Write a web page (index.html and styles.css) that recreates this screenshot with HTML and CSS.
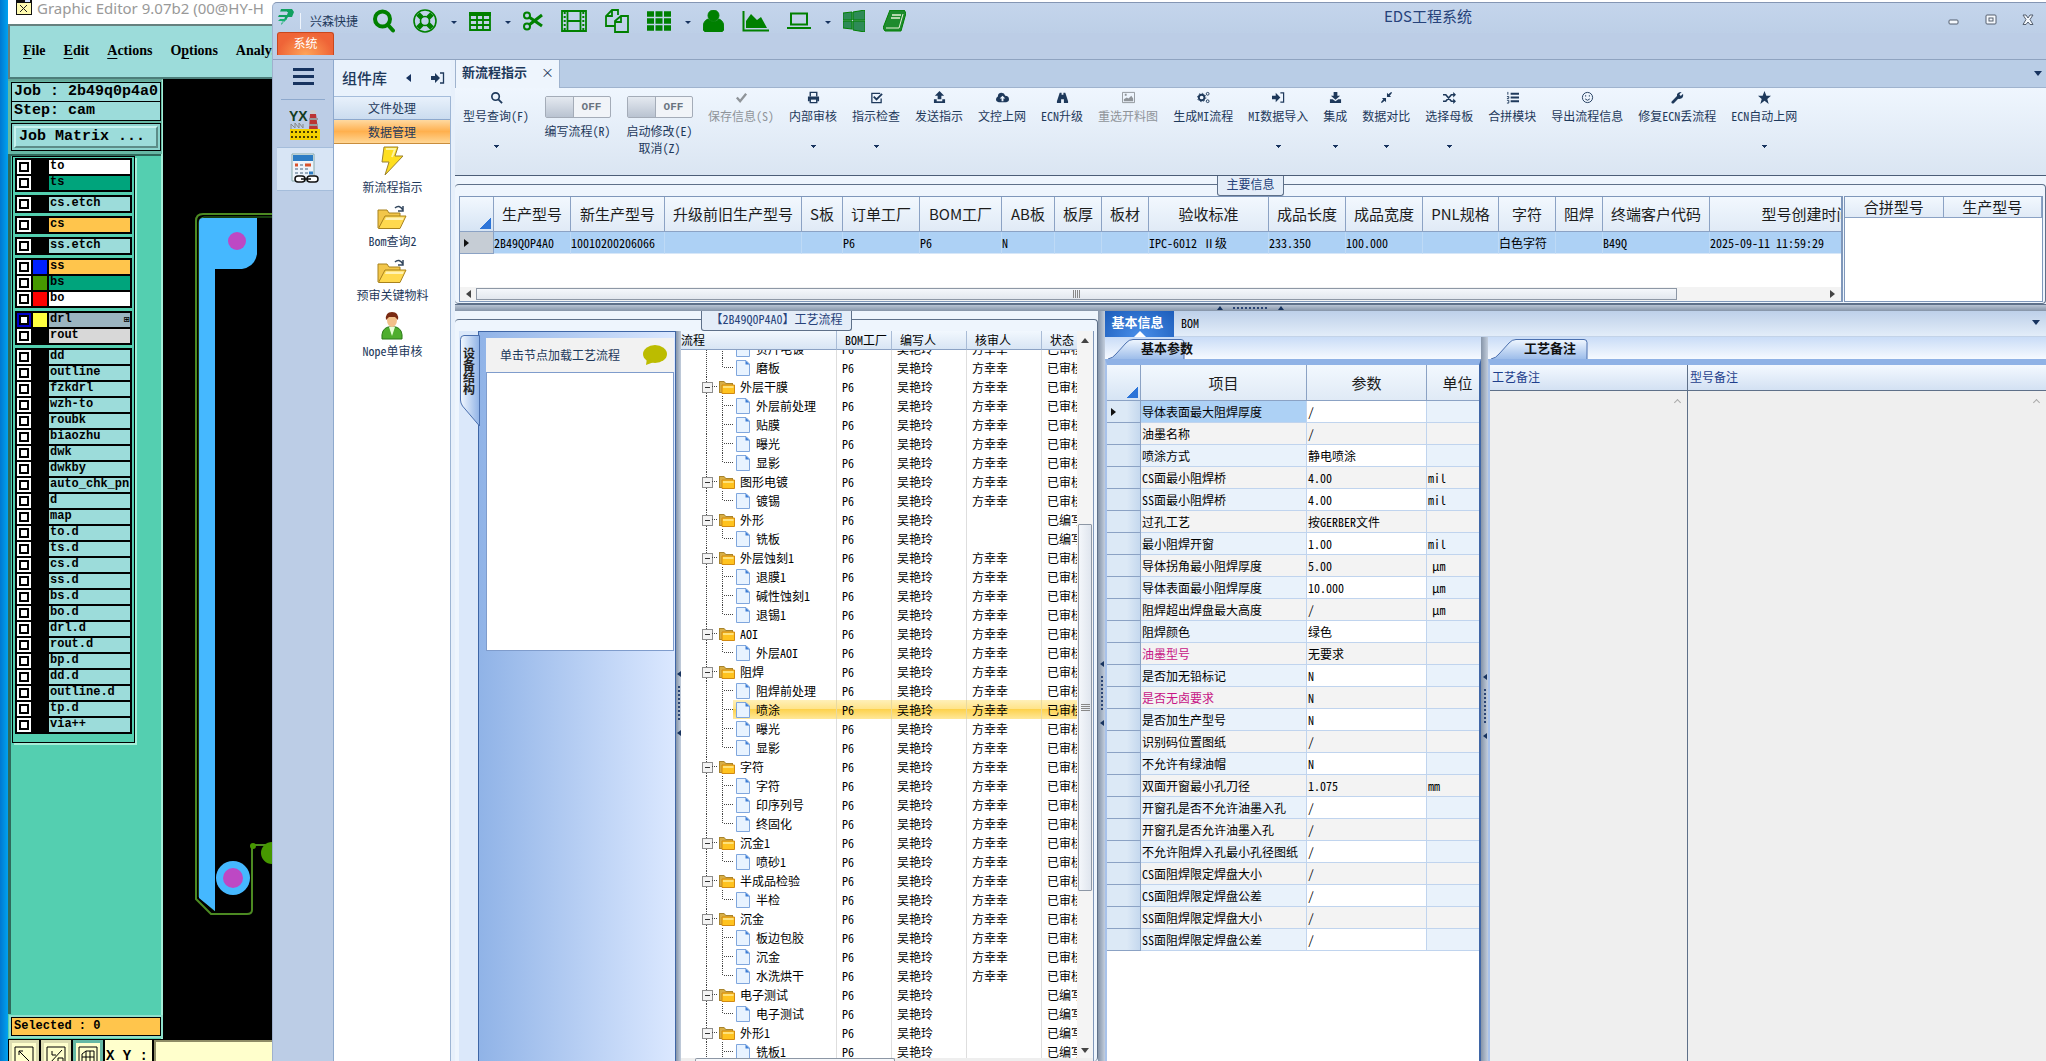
FILE: index.html
```html
<!DOCTYPE html>
<html lang="zh-CN">
<head>
<meta charset="utf-8">
<title>EDS工程系统</title>
<link rel="stylesheet" href="styles.css">
</head>
<body>
<svg class="defs" aria-hidden="true">
  <symbol id="folder" viewBox="0 0 16 15"><path d="M0 2h5l2 2h7v10H0z" fill="#a8842c"/><path d="M1 3h4l2 2h6v8H1z" fill="#d8ae45"/><path d="M3 6h12.500v8.500H3z" fill="#ffc31f" stroke="#d28a12"/><path d="M4 7h10.500v2H4z" fill="#ffe27a"/></symbol>
  <symbol id="doc" viewBox="0 0 14 16"><path d="M.5.5h9.500l3.500 3.500v11.500H.5z" fill="#e8f3ff" stroke="#7fa6dd"/><path d="M9.500.5v4h4z" fill="#3f7fd6"/></symbol>
  <symbol id="bigfolder" viewBox="0 0 30 26"><path d="M1 24V6h9l2 3h11v4" fill="#f2c64a" stroke="#a8821d"/><path d="M1.500 24.500L8 12h21l-6 12.500z" fill="#ffd94f" stroke="#a8821d"/><path d="M9 13.500h18l-1 2.500H8z" fill="#fff2b5"/><path d="M18 4q4-4 8 2M26 2v5h-5" fill="none" stroke="#33475f" stroke-width="1.500"/></symbol>
  <symbol id="pin" viewBox="0 0 14 12"><path d="M0 4h4V1l5 5-5 5V8H0z" fill="currentColor"/><path d="M9 1h3.500v10H9" fill="none" stroke="currentColor" stroke-width="1.300"/></symbol>
</svg>

<section class="editor">
  <header class="editor-title"><svg width="16" height="15" viewBox="0 0 16 15"><path d="M0 0h16v15H0z" fill="#111"/><path d="M1 3h14v11H1z" fill="#fffbb0"/><path d="M9 0h5v2H9z" fill="#cfe0ff"/><path d="M4 5l7 7M11 5l-7 7" stroke="#222"/></svg><span>Graphic Editor 9.07b2 (00@HY-H</span></header>
  <nav class="menubar"><button><u>F</u>ile</button><button><u>E</u>dit</button><button><u>A</u>ctions</button><button>O<u>p</u>tions</button><button>Analysis</button></nav>
  <div class="workspace">
    <aside class="layers">
      <div class="job">
        <p class="line">Job : 2b49q0p4a0</p>
        <p class="line">Step: cam</p>
        <div class="matrix"><button>Job Matrix ...</button></div>
      </div>
      <div class="well">
        <div class="frame">
          <ul class="grp"><li><label><input type="checkbox"><i></i><span class="white">to</span></label></li><li><label><input type="checkbox"><i></i><span class="green">ts</span></label></li></ul>
          <ul class="grp"><li><label><input type="checkbox"><i></i><span>cs.etch</span></label></li></ul>
          <ul class="grp"><li><label><input type="checkbox"><i></i><span class="gold">cs</span></label></li></ul>
          <ul class="grp"><li><label><input type="checkbox"><i></i><span>ss.etch</span></label></li></ul>
          <ul class="grp"><li><label><input type="checkbox"><i class="blue"></i><span class="gold">ss</span></label></li><li><label><input type="checkbox"><i class="olive"></i><span class="green">bs</span></label></li><li><label><input type="checkbox"><i class="red"></i><span class="white">bo</span></label></li></ul>
          <ul class="grp"><li><label><input type="checkbox" class="on"><i class="yellow"></i><span class="slate">drl<b>⊞</b></span></label></li><li><label><input type="checkbox"><i></i><span class="gray">rout</span></label></li></ul>
          <ul class="grp">
            <li><label><input type="checkbox"><i></i><span>dd</span></label></li>
            <li><label><input type="checkbox"><i></i><span>outline</span></label></li>
            <li><label><input type="checkbox"><i></i><span>fzkdrl</span></label></li>
            <li><label><input type="checkbox"><i></i><span>wzh-to</span></label></li>
            <li><label><input type="checkbox"><i></i><span>roubk</span></label></li>
            <li><label><input type="checkbox"><i></i><span>biaozhu</span></label></li>
            <li><label><input type="checkbox"><i></i><span>dwk</span></label></li>
            <li><label><input type="checkbox"><i></i><span>dwkby</span></label></li>
            <li><label><input type="checkbox"><i></i><span>auto_chk_pnl</span></label></li>
            <li><label><input type="checkbox"><i></i><span>d</span></label></li>
            <li><label><input type="checkbox"><i></i><span>map</span></label></li>
            <li><label><input type="checkbox"><i></i><span>to.d</span></label></li>
            <li><label><input type="checkbox"><i></i><span>ts.d</span></label></li>
            <li><label><input type="checkbox"><i></i><span>cs.d</span></label></li>
            <li><label><input type="checkbox"><i></i><span>ss.d</span></label></li>
            <li><label><input type="checkbox"><i></i><span>bs.d</span></label></li>
            <li><label><input type="checkbox"><i></i><span>bo.d</span></label></li>
            <li><label><input type="checkbox"><i></i><span>drl.d</span></label></li>
            <li><label><input type="checkbox"><i></i><span>rout.d</span></label></li>
            <li><label><input type="checkbox"><i></i><span>bp.d</span></label></li>
            <li><label><input type="checkbox"><i></i><span>dd.d</span></label></li>
            <li><label><input type="checkbox"><i></i><span>outline.d</span></label></li>
            <li><label><input type="checkbox"><i></i><span>tp.d</span></label></li>
            <li><label><input type="checkbox"><i></i><span>via++</span></label></li>
          </ul>
        </div>
      </div>
      <p class="selected">Selected : 0</p>
    </aside>
    <svg class="board" width="110" height="860" viewBox="163 79 110 860">
      <path d="M275 214H203q-7 0-7 7V899l15 15h36q5 0 5-4V848" fill="none" stroke="#4c8a22" stroke-width="2"/>
      <path d="M275 217H204q-5 1-5 6V897l16 14" fill="none" stroke="#2f7d1e"/>
      <path d="M199 222q0-4 4-4h54v36q-2 13-15 15h-27V911l-16-13z" fill="#45b8ff"/>
      <circle cx="237" cy="241" r="9" fill="#bd48c4"/>
      <circle cx="233" cy="878" r="17" fill="#45b8ff"/><circle cx="233" cy="878" r="10" fill="#bd48c4"/>
      <path d="M253 845h20" stroke="#4c8a22" stroke-width="2"/><circle cx="253" cy="846" r="3" fill="#469800"/><circle cx="272" cy="853" r="11" fill="#469800"/>
    </svg>
  </div>
  <footer class="coords">
    <button aria-label="缩放"><svg width="20" height="20" viewBox="0 0 20 20"><path d="M1 1h18v18H1zM5 5l11 11M5 9V5h4" /></svg></button>
    <button aria-label="比例"><svg width="20" height="20" viewBox="0 0 20 20"><path d="M1 1h18v18H1zM4 17L16 4M6 5v4h4M12 12h5v4h-5z"/></svg></button>
    <button class="hot" aria-label="网格"><svg width="20" height="20" viewBox="0 0 20 20"><path d="M1 1h18v18H1zM4 8l4-3h8v12H4zM4 11h12M8 5v12M12 5v12"/></svg></button>
    <label for="xy">X Y :</label><input id="xy" type="text">
  </footer>
</section>

<main class="eds">
  <header class="titlebar">
    <div class="quick">
      <svg class="logo" width="18" height="18" viewBox="0 0 18 18"><path d="M4 1h11l2 3-2 5h-4l-2 3H7l1-3H1l1-2h8l1-3H3z" fill="#10a060"/><path d="M3 11h7l-6 6 1-4H1z" fill="#18b070"/><path d="M1 4h9M1 14h6" stroke="#bfd0ea"/></svg>
      <i class="bar"></i><span class="brand">兴森快捷</span>
      <button aria-label="搜索"><svg width="22" height="24" viewBox="0 0 22 24"><circle cx="9.500" cy="10" r="7.500" fill="none" stroke-width="4"/><path d="M15 16l5 5.500" stroke-width="4" stroke-linecap="round"/></svg></button>
      <button aria-label="帮助"><svg width="24" height="24" viewBox="0 0 24 24"><circle cx="12" cy="12" r="11" fill="none" stroke-width="1.600"/><circle cx="12" cy="12" r="4.500" fill="none" stroke-width="1.600"/><path d="M5 5l4 4M19 5l-4 4M5 19l4-4M19 19l-4-4" stroke-width="5"/></svg></button><i class="dd"></i>
      <button aria-label="表格"><svg width="22" height="20" viewBox="0 0 22 20"><path d="M1 2h20v17H1zM1 9h20M1 14h20M8 4v15M14 4v15" fill="none" stroke-width="1.800"/><path d="M0 1h22v4H0z" fill="green" stroke="none"/></svg></button><i class="dd"></i>
      <button aria-label="剪切"><svg width="20" height="20" viewBox="0 0 20 20" fill="none"><circle cx="4" cy="4.500" r="3" stroke-width="2"/><circle cx="4" cy="15.500" r="3" stroke-width="2"/><path d="M6 6l13 9M6 14l13-10" stroke-width="3"/></svg></button>
      <button aria-label="影片"><svg width="26" height="22" viewBox="0 0 26 22" fill="none"><path d="M1 1h24v20H1zM6.500 1v20M19.500 1v20M6.500 11h13" stroke-width="1.800"/><path d="M3.700 2v19M22.300 2v19" stroke-width="2" stroke-dasharray="2 2"/></svg></button>
      <button aria-label="复制"><svg width="24" height="24" viewBox="0 0 24 24" fill="none" stroke-width="1.800"><path d="M10 17H1V7l6-6h6v5M7 1v6H1"/><path d="M10 12l6-5h7v16H10zM16 7v6h-6"/></svg></button>
      <button aria-label="应用"><svg width="24" height="20" viewBox="0 0 24 20"><path d="M0 3h24M0 10h24M0 17h24" stroke-width="5.500" stroke-dasharray="7 1.500"/></svg></button><i class="dd"></i>
      <button aria-label="用户"><svg width="21" height="22" viewBox="0 0 21 22" stroke="none"><circle cx="10.500" cy="5.500" r="5.500" fill="green"/><path d="M5 9q-5 2-5 9 0 4 4 4h13q4 0 4-4 0-7-5-9-5 5-11 0z" fill="green"/></svg></button>
      <button aria-label="图表"><svg width="27" height="21" viewBox="0 0 27 21"><path d="M1.500 0v19.500H27" fill="none" stroke-width="2"/><path d="M4 17v-7l5-7 6 6 4-3 6 11z" fill="green" stroke="none"/></svg></button>
      <button aria-label="终端"><svg width="24" height="18" viewBox="0 0 24 18"><path d="M4 1.500h16v11H4z" fill="none" stroke-width="2"/><path d="M0 15h24v2H0z" fill="green" stroke="none"/></svg></button><i class="dd"></i>
      <button aria-label="窗口"><svg width="22" height="22" viewBox="0 0 22 22" stroke="none"><path d="M0 3l9-1v8H0zM10 2l12-2v10H10zM0 11h9v8l-9-1zM10 11h12v11l-12-2z" fill="#2e8b57"/></svg></button>
      <button aria-label="手册"><svg width="23" height="22" viewBox="0 0 23 22" stroke="none"><path d="M7 0h14l2 3-5 18H2l-2-3z" fill="#1e8b2e"/><path d="M9 5h9M8 8h9" stroke="#e8f2d8" stroke-width="1.500"/><path d="M3 18h13L20 4" fill="none" stroke="#e8f2d8"/></svg></button>
    </div>
    <h1>EDS工程系统</h1>
    <div class="winbtns"><button aria-label="最小化"><svg width="12" height="12"><rect x="1" y="6" width="9" height="4" rx="1" /></svg></button><button aria-label="还原"><svg width="12" height="12"><rect x="1" y="1" width="10" height="9" rx="1"/><rect x="4" y="4" width="4" height="3"/></svg></button><button aria-label="关闭"><svg width="12" height="12"><path d="M1 1h3l2 3 2-3h3L8 5.500l3 5H8L6 8l-2 2.500H1l3-5z"/></svg></button></div>
  </header>
  <button class="systab">系统</button>
  <div class="body">
    <nav class="rail">
      <button class="burger" aria-label="菜单"><i></i><i></i><i></i></button>
      <button aria-label="工厂"><svg width="32" height="32" viewBox="0 0 32 32"><text x="0" y="12" font-size="14" class="yx">YX</text><path d="M21 5h6l2 16h-9z" fill="#b33"/><path d="M20 10h9M20 16h9" stroke="#999" stroke-width="2"/><ellipse cx="24" cy="3" rx="3" ry="2" fill="#ccc"/><path d="M2 20v-5l4 4v-5l4 5v-5l4 5v-4" fill="none" stroke="#888"/><path d="M1 20h30v11H1z" fill="#f4d000"/><path d="M2 23h28M2 28h28" stroke="#4a3f00" stroke-width="2" stroke-dasharray="2 2"/></svg></button>
      <button class="cur" aria-label="计算"><svg width="28" height="32" viewBox="0 0 28 32"><path d="M1 1h22v27H1z" fill="#eef4fb" stroke="#8aa"/><path d="M2 2h20v6H2z" fill="#2c7cc4"/><path d="M9 12h3M4 16h3M9 16h3M14 16h3M4 20h3M9 20h3M14 20h3" stroke="#9ab" stroke-width="2"/><path d="M4 12h3M14 12h6" stroke="#d9532c" stroke-width="3"/><path d="M18 20h4" stroke="#2c7cc4" stroke-width="3"/><g fill="#fff" stroke="#111" stroke-width="1.500"><rect x="4" y="23" width="10" height="6" rx="3"/><rect x="16" y="23" width="11" height="6" rx="3"/><path d="M10 26h10"/></g></svg></button>
    </nav>
    <aside class="library">
      <h2>组件库<i class="tri-l"></i><svg width="14" height="12"><use href="#pin"/></svg></h2>
      <button class="cat">文件处理</button>
      <button class="cat act">数据管理</button>
      <div class="tools">
        <a href="#n1"><svg width="24" height="30" viewBox="0 0 24 30"><path d="M4 1h14l-3 9h8L5 29l4-13H2z" fill="#ffdf1f" stroke="#9b8130"/><path d="M6 3h9l-3 8" fill="none" stroke="#fff6a0" stroke-width="2"/></svg>新流程指示</a>
        <a href="#n2"><svg width="30" height="26"><use href="#bigfolder"/></svg>Bom查询2</a>
        <a href="#n3"><svg width="30" height="26"><use href="#bigfolder"/></svg>预审关键物料</a>
        <a href="#n4"><svg width="22" height="28" viewBox="0 0 22 28"><path d="M1 27q-1-10 6-12h8q7 2 6 12z" fill="#4fae2e" stroke="#2c7a18"/><path d="M8 15h6l-3 9z" fill="#e8ffd8"/><ellipse cx="11" cy="8" rx="5" ry="7" fill="#f2c08a"/><path d="M5 8q-1-8 6-8t6 8l-3-3H8z" fill="#7a2a12"/></svg>Nope单审核</a>
      </div>
    </aside>
    <div class="work">
      <div class="tabs"><button>新流程指示<span>×</span></button><i class="tri-d"></i></div>
      <div class="toolbar">
        <button class="more"><svg viewBox="0 0 14 14"><circle cx="6" cy="6" r="4" fill="none" stroke="currentColor" stroke-width="1.800"/><path d="M9 9l4 4" stroke="currentColor" stroke-width="2"/></svg>型号查询(F)</button>
        <label class="tog"><span class="switch"><input type="checkbox"><b>OFF</b></span>编写流程(R)</label>
        <label class="tog"><span class="switch"><input type="checkbox"><b>OFF</b></span>启动修改(E)<br>取消(Z)</label>
        <button disabled><svg viewBox="0 0 14 14"><path d="M2 7l3.500 4L12 3" fill="none" stroke="currentColor" stroke-width="2.500"/></svg>保存信息(S)</button>
        <button class="more"><svg viewBox="0 0 14 14"><path d="M3.500 6V1.500h7V6M3.500 12.500v-4h7v4z" fill="none" stroke="currentColor" stroke-width="1.500"/><path d="M1 6h12v5h-2V9H3v2H1z" fill="currentColor"/></svg>内部审核</button>
        <button class="more"><svg viewBox="0 0 14 14"><path d="M12 8v4.500H2v-10h9" fill="none" stroke="currentColor" stroke-width="1.400"/><path d="M4 6l3 3 6-6" fill="none" stroke="currentColor" stroke-width="2"/></svg>指示检查</button>
        <button><svg viewBox="0 0 14 14"><path d="M7 0l5 5H9v4H5V5H2zM1 9h3v2h6V9h3v4H1z" fill="currentColor"/></svg>发送指示</button>
        <button><svg viewBox="0 0 14 14"><path d="M3 12q-3 0-3-3 0-2 2-3 0-4 4-4 3 0 4 3 4 0 4 4 0 3-3 3zM7 5L4 8h2v3h2V8h2z" fill="currentColor" fill-rule="evenodd"/></svg>文控上网</button>
        <button><svg viewBox="0 0 14 14"><path d="M4 2h2v2h2V2h2l3 9v2H8.500V9h-3v4H1v-2z" fill="currentColor"/></svg>ECN升级</button>
        <button disabled><svg viewBox="0 0 14 14"><path d="M.5 1.500h13v11H.5z" fill="none" stroke="currentColor"/><path d="M2 11V9l3-2 2 1 3-3 2 3v3zM3 3h2v2H3z" fill="currentColor"/></svg>重选开料图</button>
        <button><svg viewBox="0 0 14 14" fill="none" stroke="currentColor"><circle cx="5" cy="7" r="3" stroke-width="2"/><circle cx="5" cy="7" r="4.500" stroke-dasharray="1.500 2"/><circle cx="11.500" cy="3" r="1.500"/><circle cx="11.500" cy="11" r="1.500"/></svg>生成MI流程</button>
        <button class="more"><svg viewBox="0 0 14 12"><use href="#pin"/></svg>MI数据导入</button>
        <button class="more"><svg viewBox="0 0 14 14"><path d="M5 1h4v4h3L7 9.500 2 5h3zM1 9h3l3 2 3-2h3v4H1z" fill="currentColor"/></svg>集成</button>
        <button class="more"><svg viewBox="0 0 14 14"><path d="M7.500 6.500V2l1.500 1.500L12 1l1 1-2.500 3L12 6.500zM6.500 7.500V12L5 10.500 2 13l-1-1 2.500-3L2 7.500z" fill="currentColor"/></svg>数据对比</button>
        <button class="more"><svg viewBox="0 0 14 14"><path d="M0 4h3l6 7h3M0 11h3l6-7h3" fill="none" stroke="currentColor" stroke-width="1.800"/><path d="M11 1l3 3-3 3zM11 8l3 3-3 3z" fill="currentColor"/></svg>选择母板</button>
        <button><svg viewBox="0 0 14 14"><path d="M5 3h9M5 7h9M5 11h9" stroke="currentColor" stroke-width="2"/><path d="M2 1v3M1 6h2v2H1M1 10h2v3H1" fill="none" stroke="currentColor"/></svg>合拼模块</button>
        <button><svg viewBox="0 0 14 14" fill="none" stroke="currentColor"><circle cx="7" cy="7" r="5.500"/><path d="M4.500 8.500q2.500 3 5 0M5 4.500v1.500M9 4.500v1.500"/></svg>导出流程信息</button>
        <button><svg viewBox="0 0 14 14"><path d="M2 12l6-6" stroke="currentColor" stroke-width="3" stroke-linecap="round"/><path d="M12 2l-2.500 2.500M6.500 6q-1-5 5-5L9 3.500l1.500 2L13 3q1 6-5 5.500z" fill="currentColor"/></svg>修复ECN丢流程</button>
        <button class="more"><svg viewBox="0 0 14 14"><path d="M7 0l2 5h5l-4 3.500L11.500 14 7 10.500 2.500 14 4 8.500 0 5h5z" fill="currentColor"/></svg>ECN自动上网</button>
      </div>
      <section class="group info">
        <h3>主要信息</h3>
        <div class="info-row">
          <div class="info-grid">
            <div class="clip">
            <table>
              <colgroup><col style="width:34px"><col style="width:77px"><col style="width:94px"><col style="width:137px"><col style="width:41px"><col style="width:77px"><col style="width:82px"><col style="width:53px"><col style="width:47px"><col style="width:47px"><col style="width:120px"><col style="width:77px"><col style="width:77px"><col style="width:76px"><col style="width:57px"><col style="width:47px"><col style="width:107px"><col style="width:194px"></colgroup>
              <thead><tr><th class="corner"></th><th>生产型号</th><th>新生产型号</th><th>升级前旧生产型号</th><th>S板</th><th>订单工厂</th><th>BOM工厂</th><th>AB板</th><th>板厚</th><th>板材</th><th>验收标准</th><th>成品长度</th><th>成品宽度</th><th>PNL规格</th><th>字符</th><th>阻焊</th><th>终端客户代码</th><th>型号创建时间</th></tr></thead>
              <tbody><tr><td class="rowhead"><i class="tri-r"></i></td><td>2B49Q0P4A0</td><td>10010200206066</td><td></td><td></td><td>P6</td><td>P6</td><td>N</td><td></td><td></td><td>IPC-6012 Ⅱ级</td><td>233.350</td><td>100.000</td><td></td><td>白色字符</td><td></td><td>B49Q</td><td>2025-09-11 11:59:29</td></tr></tbody>
            </table>
            </div>
            <div class="hscroll"><i class="tri-l"></i><div class="track"><div class="thumb"><i></i></div></div><i class="tri-r"></i></div>
          </div>
          <div class="merge"><table><thead><tr><th>合拼型号</th><th>生产型号</th></tr></thead></table></div>
        </div>
      </section>
      <div class="split-h"><i class="tri-u"></i><i class="dots"></i><i class="tri-u"></i></div>
      <div class="lower">
        <section class="group flow">
          <h3>【2B49Q0P4A0】工艺流程</h3>
          <div class="flow-row">
            <div class="vtab"><svg width="21" height="96" viewBox="0 0 21 96"><path d="M20.500 4.500H5q-3.500 0-3.500 4V69q0 3 2 6l17 20z" fill="url(#vt)" stroke="#4a6fae"/><defs><linearGradient id="vt"><stop offset="0" stop-color="#f4f9ff"/><stop offset="1" stop-color="#8fb2e6"/></linearGradient></defs></svg><span>设备结构</span></div>
            <div class="struct">
              <div class="hint"><span>单击节点加载工艺流程</span><svg width="24" height="21" viewBox="0 0 24 21"><ellipse cx="12" cy="9" rx="12" ry="9" fill="#bcbc00"/><path d="M4 13l-1 7 8-3z" fill="#bcbc00"/></svg></div>
              <div class="blank"></div>
            </div>
            <div class="split-v"><i class="tri-l"></i><i class="dots"></i><i class="tri-l"></i></div>
            <div class="treebox">
              <div class="treewrap">
              <table class="tree">
                <colgroup><col style="width:156px"><col style="width:55px"><col style="width:75px"><col style="width:75px"><col></colgroup>
                <thead><tr><th>流程</th><th>BOM工厂</th><th>编写人</th><th>核审人</th><th>状态</th></tr></thead>
                <tbody>
                <tr class="cut"><td><div><span class="leaf"><svg><use href="#doc"/></svg>负片电镀</span></div></td><td><div><span>P6</span></div></td><td><div><span>吴艳玲</span></div></td><td><div><span>方幸幸</span></div></td><td><div><span>已审核</span></div></td></tr>
                <tr><td class="leaf end"><svg><use href="#doc"/></svg>磨板</td><td>P6</td><td>吴艳玲</td><td>方幸幸</td><td>已审核</td></tr>
                <tr><td class="dir"><svg><use href="#folder"/></svg>外层干膜</td><td>P6</td><td>吴艳玲</td><td>方幸幸</td><td>已审核</td></tr>
                <tr><td class="leaf"><svg><use href="#doc"/></svg>外层前处理</td><td>P6</td><td>吴艳玲</td><td>方幸幸</td><td>已审核</td></tr>
                <tr><td class="leaf"><svg><use href="#doc"/></svg>贴膜</td><td>P6</td><td>吴艳玲</td><td>方幸幸</td><td>已审核</td></tr>
                <tr><td class="leaf"><svg><use href="#doc"/></svg>曝光</td><td>P6</td><td>吴艳玲</td><td>方幸幸</td><td>已审核</td></tr>
                <tr><td class="leaf end"><svg><use href="#doc"/></svg>显影</td><td>P6</td><td>吴艳玲</td><td>方幸幸</td><td>已审核</td></tr>
                <tr><td class="dir"><svg><use href="#folder"/></svg>图形电镀</td><td>P6</td><td>吴艳玲</td><td>方幸幸</td><td>已审核</td></tr>
                <tr><td class="leaf end"><svg><use href="#doc"/></svg>镀锡</td><td>P6</td><td>吴艳玲</td><td>方幸幸</td><td>已审核</td></tr>
                <tr><td class="dir"><svg><use href="#folder"/></svg>外形</td><td>P6</td><td>吴艳玲</td><td></td><td>已编写</td></tr>
                <tr><td class="leaf end"><svg><use href="#doc"/></svg>铣板</td><td>P6</td><td>吴艳玲</td><td></td><td>已编写</td></tr>
                <tr><td class="dir"><svg><use href="#folder"/></svg>外层蚀刻1</td><td>P6</td><td>吴艳玲</td><td>方幸幸</td><td>已审核</td></tr>
                <tr><td class="leaf"><svg><use href="#doc"/></svg>退膜1</td><td>P6</td><td>吴艳玲</td><td>方幸幸</td><td>已审核</td></tr>
                <tr><td class="leaf"><svg><use href="#doc"/></svg>碱性蚀刻1</td><td>P6</td><td>吴艳玲</td><td>方幸幸</td><td>已审核</td></tr>
                <tr><td class="leaf end"><svg><use href="#doc"/></svg>退锡1</td><td>P6</td><td>吴艳玲</td><td>方幸幸</td><td>已审核</td></tr>
                <tr><td class="dir"><svg><use href="#folder"/></svg>AOI</td><td>P6</td><td>吴艳玲</td><td>方幸幸</td><td>已审核</td></tr>
                <tr><td class="leaf end"><svg><use href="#doc"/></svg>外层AOI</td><td>P6</td><td>吴艳玲</td><td>方幸幸</td><td>已审核</td></tr>
                <tr><td class="dir"><svg><use href="#folder"/></svg>阻焊</td><td>P6</td><td>吴艳玲</td><td>方幸幸</td><td>已审核</td></tr>
                <tr><td class="leaf"><svg><use href="#doc"/></svg>阻焊前处理</td><td>P6</td><td>吴艳玲</td><td>方幸幸</td><td>已审核</td></tr>
                <tr class="sel"><td class="leaf"><svg><use href="#doc"/></svg>喷涂</td><td>P6</td><td>吴艳玲</td><td>方幸幸</td><td>已审核</td></tr>
                <tr><td class="leaf"><svg><use href="#doc"/></svg>曝光</td><td>P6</td><td>吴艳玲</td><td>方幸幸</td><td>已审核</td></tr>
                <tr><td class="leaf end"><svg><use href="#doc"/></svg>显影</td><td>P6</td><td>吴艳玲</td><td>方幸幸</td><td>已审核</td></tr>
                <tr><td class="dir"><svg><use href="#folder"/></svg>字符</td><td>P6</td><td>吴艳玲</td><td>方幸幸</td><td>已审核</td></tr>
                <tr><td class="leaf"><svg><use href="#doc"/></svg>字符</td><td>P6</td><td>吴艳玲</td><td>方幸幸</td><td>已审核</td></tr>
                <tr><td class="leaf"><svg><use href="#doc"/></svg>印序列号</td><td>P6</td><td>吴艳玲</td><td>方幸幸</td><td>已审核</td></tr>
                <tr><td class="leaf end"><svg><use href="#doc"/></svg>终固化</td><td>P6</td><td>吴艳玲</td><td>方幸幸</td><td>已审核</td></tr>
                <tr><td class="dir"><svg><use href="#folder"/></svg>沉金1</td><td>P6</td><td>吴艳玲</td><td>方幸幸</td><td>已审核</td></tr>
                <tr><td class="leaf end"><svg><use href="#doc"/></svg>喷砂1</td><td>P6</td><td>吴艳玲</td><td>方幸幸</td><td>已审核</td></tr>
                <tr><td class="dir"><svg><use href="#folder"/></svg>半成品检验</td><td>P6</td><td>吴艳玲</td><td>方幸幸</td><td>已审核</td></tr>
                <tr><td class="leaf end"><svg><use href="#doc"/></svg>半检</td><td>P6</td><td>吴艳玲</td><td>方幸幸</td><td>已审核</td></tr>
                <tr><td class="dir"><svg><use href="#folder"/></svg>沉金</td><td>P6</td><td>吴艳玲</td><td>方幸幸</td><td>已审核</td></tr>
                <tr><td class="leaf"><svg><use href="#doc"/></svg>板边包胶</td><td>P6</td><td>吴艳玲</td><td>方幸幸</td><td>已审核</td></tr>
                <tr><td class="leaf"><svg><use href="#doc"/></svg>沉金</td><td>P6</td><td>吴艳玲</td><td>方幸幸</td><td>已审核</td></tr>
                <tr><td class="leaf end"><svg><use href="#doc"/></svg>水洗烘干</td><td>P6</td><td>吴艳玲</td><td>方幸幸</td><td>已审核</td></tr>
                <tr><td class="dir"><svg><use href="#folder"/></svg>电子测试</td><td>P6</td><td>吴艳玲</td><td></td><td>已编写</td></tr>
                <tr><td class="leaf end"><svg><use href="#doc"/></svg>电子测试</td><td>P6</td><td>吴艳玲</td><td></td><td>已编写</td></tr>
                <tr><td class="dir"><svg><use href="#folder"/></svg>外形1</td><td>P6</td><td>吴艳玲</td><td></td><td>已编写</td></tr>
                <tr><td class="leaf"><svg><use href="#doc"/></svg>铣板1</td><td>P6</td><td>吴艳玲</td><td></td><td>已编写</td></tr>
                </tbody>
              </table>
              </div>
              <div class="vscroll"><i class="tri-u"></i><div class="track"><div class="thumb"><i></i></div></div><i class="tri-d"></i></div>
              <div class="hbar"><i></i></div>
            </div>
          </div>
        </section>
        <div class="split-v wide"><i class="tri-l"></i><i class="dots"></i><i class="tri-l"></i></div>
        <section class="detail">
          <div class="subtabs"><button class="on">基本信息</button><button>BOM</button><i class="tri-d"></i></div>
          <div class="panes">
            <div class="pane params">
              <div class="slant"><svg width="80" height="20" viewBox="0 0 80 20"><path d="M2 20Q7 19 10 15L20 4q3-3.500 7-3.500h48q3 0 3 3V20" fill="url(#sl)" stroke="#4a6fae"/><defs><linearGradient id="sl" x2="0" y2="1"><stop offset="0" stop-color="#f0f7ff"/><stop offset="1" stop-color="#9dbdea"/></linearGradient></defs></svg><span>基本参数</span></div>
              <div class="pane-body">
              <table class="ptable">
                <colgroup><col style="width:34px"><col style="width:166px"><col style="width:120px"><col></colgroup>
                <thead><tr><th class="corner"></th><th>项目</th><th>参数</th><th>单位</th></tr></thead>
                <tbody>
                <tr><td><i class="tri-r"></i></td><td class="hl">导体表面最大阻焊厚度</td><td>/</td><td></td></tr>
                <tr><td></td><td>油墨名称</td><td>/</td><td></td></tr>
                <tr><td></td><td>喷涂方式</td><td>静电喷涂</td><td></td></tr>
                <tr><td></td><td>CS面最小阻焊桥</td><td>4.00</td><td>mil</td></tr>
                <tr><td></td><td>SS面最小阻焊桥</td><td>4.00</td><td>mil</td></tr>
                <tr><td></td><td>过孔工艺</td><td>按GERBER文件</td><td></td></tr>
                <tr><td></td><td>最小阻焊开窗</td><td>1.00</td><td>mil</td></tr>
                <tr><td></td><td>导体拐角最小阻焊厚度</td><td>5.00</td><td class="um">μm</td></tr>
                <tr><td></td><td>导体表面最小阻焊厚度</td><td>10.000</td><td class="um">μm</td></tr>
                <tr><td></td><td>阻焊超出焊盘最大高度</td><td>/</td><td class="um">μm</td></tr>
                <tr><td></td><td>阻焊颜色</td><td>绿色</td><td></td></tr>
                <tr><td></td><td class="pink">油墨型号</td><td>无要求</td><td></td></tr>
                <tr><td></td><td>是否加无铅标记</td><td>N</td><td></td></tr>
                <tr><td></td><td class="pink">是否无卤要求</td><td>N</td><td></td></tr>
                <tr><td></td><td>是否加生产型号</td><td>N</td><td></td></tr>
                <tr><td></td><td>识别码位置图纸</td><td>/</td><td></td></tr>
                <tr><td></td><td>不允许有绿油帽</td><td>N</td><td></td></tr>
                <tr><td></td><td>双面开窗最小孔刀径</td><td>1.075</td><td>mm</td></tr>
                <tr><td></td><td>开窗孔是否不允许油墨入孔</td><td>/</td><td></td></tr>
                <tr><td></td><td>开窗孔是否允许油墨入孔</td><td>/</td><td></td></tr>
                <tr><td></td><td>不允许阻焊入孔最小孔径图纸</td><td>/</td><td></td></tr>
                <tr><td></td><td>CS面阻焊限定焊盘大小</td><td>/</td><td></td></tr>
                <tr><td></td><td>CS面阻焊限定焊盘公差</td><td>/</td><td></td></tr>
                <tr><td></td><td>SS面阻焊限定焊盘大小</td><td>/</td><td></td></tr>
                <tr><td></td><td>SS面阻焊限定焊盘公差</td><td>/</td><td></td></tr>
                </tbody>
              </table>
              </div>
            </div>
            <div class="split-v wide"><i class="tri-l"></i><i class="dots"></i><i class="tri-l"></i></div>
            <div class="pane notes">
              <div class="slant"><svg width="100" height="20" viewBox="0 0 100 20"><path d="M2 20Q7 19 10 15L20 4q3-3.500 7-3.500h68q3 0 3 3V20" fill="url(#sl)" stroke="#4a6fae"/></svg><span>工艺备注</span></div>
              <div class="pane-body note-cols">
                <div class="note"><label for="note1">工艺备注</label><textarea id="note1"></textarea><i class="caret"></i></div>
                <div class="note"><label for="note2">型号备注</label><textarea id="note2"></textarea><i class="caret"></i></div>
              </div>
            </div>
          </div>
        </section>
      </div>
    </div>
  </div>
</main>
</body>
</html>
```
FILE: styles.css
```css
* { box-sizing: border-box; }
html, body { height: 100%; margin: 0; }
body {
  overflow: hidden;
  position: relative;
  background: linear-gradient(#fff, #fff) no-repeat 8px 0 / 100% 8px, linear-gradient(90deg, #0078d0, #00a2f0 8px);
  font: 12px/14px "Noto Sans Mono CJK SC", "Noto Sans CJK SC", sans-serif;
  color: #000;
}
button { font: inherit; color: inherit; border: 0; background: none; padding: 0; margin: 0; white-space: nowrap; }
p, h1, h2, h3, ul { margin: 0; padding: 0; }
ul { list-style: none; }
i { font-style: normal; display: block; flex: none; }
svg { display: block; flex: none; }
table { border-collapse: separate; border-spacing: 0; table-layout: fixed; }
th { font-weight: normal; }
.defs { position: absolute; width: 0; height: 0; }

.tri-l, .tri-r, .tri-u, .tri-d { width: 0; height: 0; border: 4px solid transparent; }
.tri-l { border-right: 5px solid #17335f; border-left: 0; }
.tri-r { border-left: 5px solid #111; border-right: 0; }
.tri-u { border-bottom: 5px solid #17335f; border-top: 0; }
.tri-d { border-top: 5px solid #17335f; border-bottom: 0; }

/* graphic editor window */
.editor {
  position: absolute; left: 8px; top: 0; bottom: 0; width: 264px;
  display: flex; flex-direction: column; overflow: hidden; background: #fff;
}
.editor-title { display: flex; gap: 5px; height: 24px; padding-left: 8px; font: 15px/16px "Noto Sans", sans-serif; color: #999; white-space: nowrap; flex: none; }
.menubar {
  display: flex; gap: 18px; align-items: center; height: 55px; flex: none; padding: 0 0 2px 13px;
  background: #9cdcda; border: 2px solid #66807e; border-right: 0; border-bottom-color: #4d7e7a;
  font: bold 14px/18px "Liberation Serif", serif;
}
.menubar u { text-underline-offset: 3px; }
.workspace { flex: 1; min-height: 0; display: flex; background: #000; }
.layers { width: 155px; background: #54cfb0; border-right: 2px solid #a5eed8; border-top: 2px solid #66a89a; display: flex; flex-direction: column; font-family: "Liberation Mono", monospace; font-weight: bold; flex: none; }
.job { padding: 1px 0 3px 3px; background: #66b8a4; width: 154px; }
.job .line { height: 20px; width: 150px; border: 1px solid #000; margin-bottom: -1px; background: #9cdcda; font-size: 15px; line-height: 18px; padding-left: 2px; white-space: pre; }
.matrix { width: 150px; margin-top: 3px; border: 1px solid #000; padding: 2px; background: #8cd4ce; }
.matrix button { display: block; width: 100%; height: 22px; text-align: left; padding-left: 3px; font-size: 15px; line-height: 18px; background: #9cdcda; border: 2px solid #c7f2ee; border-right-color: #5c8c88; border-bottom-color: #5c8c88; }
.well { flex: 1; min-height: 0; border-left: 3px solid #2f6a5c; border-top: 2px solid #2f6a5c; padding-left: 1px; }
.frame { width: 123px; padding: 1px 2px 8px; border: 1px solid #000; box-shadow: 2px 2px #a5eed8; }
.grp { width: 117px; background: #000; padding: 2px; margin-bottom: 3px; display: grid; gap: 2px; }
.grp:last-child { margin-bottom: 0; }
.grp label { display: grid; grid-template-columns: 14px 14px 1fr; gap: 2px; height: 14px; font-size: 12px; line-height: 13px; }
.grp input { appearance: none; margin: 0; width: 14px; height: 14px; background: #fff; border: 2px solid #fff; box-shadow: inset 0 0 0 2px #000; }
.grp input.on { border-color: #00c; }
.grp span { background: #9cdcda; padding-left: 1px; overflow: hidden; display: flex; justify-content: space-between; }
.grp span.white { background: #fff; }
.grp span.green { background: #00a47c; }
.grp span.gold { background: #ffc54c; }
.grp span.slate { background: #9bb4c0; }
.grp span.gray { background: #d8d8d8; }
.grp b { font-size: 8px; font-family: "DejaVu Sans", sans-serif; }
.blue { background: #0020ff; } .olive { background: #469800; } .red { background: #f00; } .yellow { background: #ffff40; }
.selected { width: 150px; height: 19px; margin: 3px 0 3px 3px; flex: none; border: 1px solid #000; background: #ffc54c; font-size: 12px; line-height: 17px; padding-left: 2px; white-space: pre; outline: 2px solid #8fe0cc; }
.board { flex: none; }
.coords { flex: none; height: 22px; background: #000; display: flex; gap: 2px; padding: 1px 0 0 1px; overflow: hidden; }
.coords button { width: 30px; height: 28px; background: #ffc; border: 3px solid #dcdcb0; display: flex; justify-content: center; }
.coords button.hot { border-color: #66b8a4; }
.coords button svg { margin-top: 3px; fill: none; stroke: #000; }
.coords label { background: #ffc; width: 47px; padding-left: 1px; font: bold 14px/32px "Liberation Mono", monospace; white-space: pre; height: 28px; }
.coords input { flex: 1; min-width: 0; height: 28px; background: #ffc; border: 2px solid #8e8c66; border-right: 0; border-radius: 0; }

/* EDS window */
.eds {
  position: absolute; left: 272px; top: 2px; right: 0; bottom: 0;
  display: flex; flex-direction: column; color: #1e395b;
  background: #bccde6; border-top: 1px solid #8496b4; border-left: 1px solid #9fb1cd; border-radius: 5px 0 0 0;
}
.titlebar { height: 30px; display: flex; background: linear-gradient(#c4d5ec, #bdcfe7); flex: none; border-radius: 5px 0 0 0; }
.quick { display: flex; align-items: center; padding-top: 6px; padding-left: 4px; flex: none; height: 30px; }
.quick button { margin-right: 18px; }
.quick svg { stroke: green; }
.quick .logo { stroke: none; margin-top: -8px; }
.quick button:has(+ .dd) { margin-right: 14px; }
.bar { width: 1px; height: 16px; background: #eef4fc; margin: 0 9px 0 5px; }
.brand { margin-right: 15px; }
.dd { border: 3px solid transparent; border-top: 3px solid #17335f; border-bottom: 0; margin: 3px 12px 0 0; }
.titlebar h1 { flex: 1; text-align: center; font: 15px/25px "Noto Sans CJK SC", sans-serif; color: #26427a; padding-right: 16px; }
.winbtns { display: flex; gap: 25px; padding: 11px 12px 0 0; }
.winbtns button { height: 12px; }
.winbtns svg { fill: #f4f8fd; stroke: #555f6e; }
.systab { width: 57px; height: 23px; margin: -1px 0 4px 4px; padding-bottom: 3px; flex: none; color: #fff; background: radial-gradient(ellipse at 50% 100%, #ffa558, #ef6437 70%); border: 1px solid #c9471d; border-bottom: 0; border-radius: 3px 3px 0 0; }
.body { flex: 1; min-height: 0; display: flex; border-top: 1px solid #8fa3c0; }
.rail { width: 61px; padding-left: 4px; display: flex; flex-direction: column; border-right: 1px solid #8ea9cd; flex: none; }
.rail button { height: 44px; display: flex; align-items: center; justify-content: center; }
.rail .burger { flex-direction: column; gap: 4px; height: 40px; margin: 0 8px 3px 4px; padding-bottom: 6px; border-bottom: 1px solid #8ea9cd; }
.burger i { width: 21px; height: 3px; background: #17335f; }
.rail .cur { background: #d8e5f5; border-top: 1px solid #a5bddb; border-bottom: 1px solid #a5bddb; }
.yx { font-family: "Liberation Sans", sans-serif; font-weight: bold; fill: #123c22; }

.library { width: 121px; flex: none; background: #fff; border-right: 4px solid #e7f0fb; display: flex; flex-direction: column; box-shadow: inset -1px 0 #9db5d4; }
.library h2 { height: 37px; display: flex; align-items: center; padding-left: 8px; background: #e9f2fc; font: 500 15px/20px "Noto Sans CJK SC", sans-serif; border-bottom: 1px solid #a5bddb; }
.library h2 .tri-l { margin: 0 20px 0 19px; }
.cat { height: 23px; margin-right: 1px; background: linear-gradient(#e8f1fb, #cbdcef); border-bottom: 1px solid #8ea9cd; flex: none; }
.cat.act { height: 24px; background: linear-gradient(#ffd9a0, #ffb04e 50%, #ffd694); border-color: #c98d3c; }
.tools { display: flex; flex-direction: column; align-items: center; padding-top: 2px; }
.tools a { color: inherit; text-decoration: none; display: flex; flex-direction: column; align-items: center; gap: 4px; margin-bottom: 10px; }

.work { flex: 1; min-width: 0; display: flex; flex-direction: column; background: #eef5fd; }
.tabs { height: 28px; flex: none; background: #b9cde6; display: flex; justify-content: space-between; align-items: center; padding-right: 4px; border-bottom: 1px solid #9fb3ce; }
.tabs button { height: 28px; width: 105px; background: #eef5fd; border: 1px solid #9fb3ce; border-bottom: 0; border-top: 0; font-weight: bold; font-size: 13px; padding-bottom: 4px; display: flex; align-items: center; padding-left: 6px; gap: 14px; }
.tabs button span { font-weight: normal; }
.toolbar { height: 88px; flex: none; display: flex; gap: 15px; padding: 3px 0 0 8px; background: linear-gradient(#eff6fe, #dae5f2); border-bottom: 1px solid #4b5d77; overflow: hidden; }
.toolbar button, .tog { display: flex; flex-direction: column; align-items: center; flex: none; line-height: 17px; text-align: center; }
.toolbar svg { width: 13px; height: 13px; margin-bottom: 3px; }
.toolbar .more { background: conic-gradient(#17335f 0 0) no-repeat 50% 54px / 5px 1px, conic-gradient(#17335f 0 0) no-repeat 50% 55px / 3px 1px, conic-gradient(#17335f 0 0) no-repeat 50% 56px / 1px 1px; height: 84px; }
.toolbar button:disabled { color: #8f9499; }
.tog { width: 67px; }
.switch { display: flex; width: 66px; height: 22px; margin: 5px 0 4px; border: 1px solid #a4acb8; border-radius: 2px; background: #f1f4f8; }
.switch input { appearance: none; margin: 0; width: 28px; height: 20px; background: linear-gradient(#e4e9f0, #b9c3d1); border-right: 1px solid #a4acb8; }
.switch b { flex: 1; font: bold 11px/20px "Liberation Mono", monospace; color: #6b7480; }

.group { position: relative; }
.group::before { content: ""; position: absolute; inset: 8px 0 0 0; border: 1px solid #5e7089; border-radius: 4px; border-left-width: 0; }
.group h3 { position: relative; margin: 0 auto; width: max-content; height: 20px; padding: 0 8px; font-size: 12px; font-weight: normal; line-height: 15px; color: #26427a; background: #e4edf8; border: 1px solid #5e7089; border-top: 0; border-radius: 0 0 3px 3px; z-index: 1; }
.info { height: 128px; flex: none; }
.info-row { position: relative; display: flex; height: 106px; margin: 0 3px 0 4px; gap: 1px; }
.info-grid { flex: 1; min-width: 0; background: #fff; border: 1px solid #7f97ba; border-right-width: 2px; display: flex; flex-direction: column; justify-content: space-between; }
.clip { overflow: hidden; }
.info-grid table { width: 1444px; }
.info-grid th, .ptable th, .merge th { background: linear-gradient(#f2f8fe, #e0eaf6); border-right: 1px solid #8ba2c4; border-bottom: 1px solid #8ba2c4; font: 15px/20px "Noto Sans CJK SC", sans-serif; color: #1c1c1c; padding: 0; white-space: nowrap; }
.info-grid th { height: 35px; }
.info-grid th.corner, .ptable th.corner { background: linear-gradient(135deg, transparent 50%, #2c74d8 50%) no-repeat calc(100% - 2px) calc(100% - 2px) / 11px 11px, linear-gradient(#f2f8fe, #d6e4f4); }
.info-grid td { height: 22px; padding: 0; background: #add1f5; border-right: 1px solid #bedaf6; border-bottom: 1px solid #d7e7f8; color: #000; white-space: nowrap; }
.info-grid td.rowhead { background: #c6cdd5; padding-left: 4px; border-color: #8ba2c4; }
.hscroll { height: 14px; display: flex; align-items: center; gap: 5px; padding: 0 6px; background: #f3f3f3; }
.hscroll .tri-l { border-right-color: #444; } .hscroll .tri-r { border-left-color: #444; }
.hscroll .track { flex: 1; }
.hscroll .thumb { width: 89%; height: 12px; border: 1px solid #8d97a5; background: linear-gradient(#f4f7fb, #e2e7ee); display: flex; justify-content: center; align-items: center; }
.hscroll .thumb i { width: 7px; height: 8px; background: repeating-linear-gradient(90deg, #888 0 1px, transparent 1px 2px); }
.merge { width: 199px; background: #fff; border: 1px solid #7f97ba; }
.merge table { width: 100%; }
.merge th { height: 21px; }

.split-h { height: 7px; flex: none; background: linear-gradient(#b8c4d4, #8594a8); display: flex; justify-content: center; align-items: center; gap: 10px; border-top: 1px solid #5e7089; }
.split-h .dots { width: 35px; height: 2px; background: repeating-linear-gradient(90deg, #2a4474 0 2px, transparent 2px 4px); }
.split-h .tri-u { border-width: 0 3px 4px; }
.split-v { width: 5px; flex: none; background: linear-gradient(90deg, #8594a8, #c3cedd); display: flex; flex-direction: column; justify-content: center; align-items: center; gap: 9px; padding-top: 14px; }
.split-v.wide { width: 7px; }
.split-v .dots { width: 2px; height: 35px; background: repeating-linear-gradient(#2a4474 0 2px, transparent 2px 4px); }
.split-v .tri-l { border-width: 3px 4px 3px 0; }

.lower { flex: 1; min-height: 0; display: flex; }
.flow { width: 643px; flex: none; display: flex; flex-direction: column; }
.flow::before { border-bottom: 0; }
.flow-row { position: relative; flex: 1; min-height: 0; display: flex; margin: 0 4px; background: #cfe0f8; }
.vtab { position: relative; width: 20px; background: #dbe8fa; display: flex; justify-content: center; border-right: 1px solid #3f66a6; }
.vtab svg { position: absolute; left: 0; top: 0; }
.vtab span { position: relative; writing-mode: vertical-rl; font: bold 12px/14px "Noto Sans CJK SC", sans-serif; color: #222; padding-top: 16px; }
.struct { width: 197px; background: linear-gradient(90deg, #90b3e7, #dbe8ff); border: 1px solid #3f66a6; border-left: 0; border-bottom: 0; padding: 6px 1px 0 7px; }
.hint { height: 34px; background: #f2f2f2; display: flex; align-items: center; justify-content: space-between; padding: 0 7px 0 14px; }
.blank { height: 279px; background: #fff; border: 1px solid #7f9ccc; }
.treebox { flex: 1; min-width: 0; display: grid; grid-template: 1fr 3px / 1fr 16px; background: #fff; border-right: 1px solid #7f97ba; }
.treewrap { overflow: hidden; min-height: 0; }
.tree { width: 100%; color: #000; }
.tree th { height: 19px; padding: 0 0 0 8px; text-align: left; background: linear-gradient(#f2f8fe, #d8e5f4); border-bottom: 1px solid #8ba2c4; border-right: 1px solid #a9bcd6; color: #000; overflow: hidden; white-space: nowrap; }
.tree th:first-child { padding-left: 0; }
.tree td { height: 19px; line-height: 19px; padding: 0 0 0 5px; overflow: hidden; white-space: nowrap; border-right: 1px solid #dedede; }
.tree td:last-child, .tree th:last-child { border-right: 0; }
.tree td:first-child { padding: 0; background: repeating-linear-gradient(#444 0 1px, #fff 1px 2px) no-repeat 25px 0 / 1px 100%; }
.tree .cut td { height: 8px; }
.tree .cut div { height: 8px; overflow: hidden; display: flex; align-items: flex-end; }
.tree .cut span { height: 19px; flex: none; display: block; }
.tree .dir, .tree .leaf { position: relative; }
.tree svg { width: 16px; height: 15px; float: left; margin: 2px 5px 0 38px; }
.tree .leaf svg { width: 14px; height: 16px; margin: 2px 6px 0 55px; position: relative; }
.tree .dir::before { content: ""; position: absolute; left: 21px; top: 5px; width: 9px; height: 9px; border: 1px solid #8d8d8d; background: linear-gradient(#333 0 0) no-repeat center / 5px 1px, #f4f4f4; }
.tree .dir::after { content: ""; position: absolute; left: 31px; top: 9px; width: 6px; height: 1px; background: repeating-linear-gradient(90deg, #444 0 1px, transparent 1px 2px); }
.tree .leaf::before { content: ""; position: absolute; left: 41px; top: 0; bottom: 0; width: 1px; background: repeating-linear-gradient(#444 0 1px, transparent 1px 2px); }
.tree .leaf.end::before { bottom: 9px; }
.tree .leaf::after { content: ""; position: absolute; left: 42px; top: 9px; width: 10px; height: 1px; background: repeating-linear-gradient(90deg, transparent 0 1px, #444 1px 2px); }
.tree .sel td { background: linear-gradient(#fff0b8, #ffe48a 45%, #fdd24e 50%, #ffe89a); border-color: #e8d9a0; }
.tree .sel td:first-child { background: repeating-linear-gradient(#444 0 1px, #fff 1px 2px) no-repeat 25px 0 / 1px 100%, linear-gradient(#fff0b8, #ffe48a 45%, #fdd24e 50%, #ffe89a) no-repeat 52px 0; }
.vscroll { background: #f4f4f4; display: flex; flex-direction: column; align-items: center; padding: 7px 0 5px; }
.vscroll .tri-u { border-bottom-color: #444; } .vscroll .tri-d { border-top-color: #444; }
.vscroll .track { flex: 1; width: 14px; display: flex; flex-direction: column; padding: 181px 0 157px; }
.vscroll .thumb { flex: 1; border: 1px solid #8d97a5; border-radius: 1px; background: linear-gradient(90deg, #f4f7fb, #dfe5ee); display: flex; align-items: center; justify-content: center; }
.vscroll .thumb i { width: 9px; height: 7px; background: repeating-linear-gradient(#888 0 1px, transparent 1px 2px); }
.hbar { grid-column: 1 / 3; background: #eee; padding-left: 14px; }
.hbar i { width: 200px; height: 3px; border: 1px solid #8d97a5; border-bottom: 0; border-radius: 2px 2px 0 0; background: #f6f8fb; }

.detail { flex: 1; min-width: 0; display: flex; flex-direction: column; }
.subtabs { height: 26px; flex: none; display: flex; align-items: center; background: linear-gradient(#bdd0e9, #e3edf9); border-bottom: 1px solid #c3d3e8; color: #000; gap: 7px; padding-bottom: 2px; }
.subtabs .on { width: 69px; height: 26px; margin-bottom: -2px; background: radial-gradient(ellipse at 50% 100%, #4a90ea, #1c5cba); color: #fff; font-weight: bold; font-size: 13px; position: relative; padding: 0 4px 3px 0; }
.subtabs .on::after { content: ""; position: absolute; left: 29px; bottom: 0; border: 6px solid transparent; border-top: 0; border-bottom-color: #fff; }
.subtabs .tri-d { margin: 0 6px 0 auto; }
.panes { flex: 1; min-height: 0; display: flex; }
.pane { display: flex; flex-direction: column; }
.params { width: 376px; flex: none; }
.notes { flex: 1; min-width: 0; }
.slant { height: 22px; flex: none; position: relative; background: linear-gradient(#c9dcf7, #f6faff); }
.slant svg { position: absolute; left: 1px; bottom: 0; }
.slant span { position: relative; display: block; padding: 4px 0 0 36px; font-weight: bold; font-size: 13px; color: #111; }
.pane-body { flex: 1; min-height: 0; border-top: 6px solid #8fb2e6; border-right: 2px solid #3f66a6; border-left: 2px solid #a8c2ea; background: #fff; box-shadow: 0 -1px #4a6fae; overflow: hidden; }
.ptable { width: calc(100% + 10px); color: #000; }
.ptable th { height: 36px; }
.ptable td { height: 22px; line-height: 20px; padding: 0 0 0 1px; white-space: nowrap; border-bottom: 1px solid #c0d4ee; border-right: 1px solid #c0d4ee; background: #f3f3f3; }
.ptable tr:nth-child(odd) td { background: #e9f2fb; }
.ptable tr:nth-child(odd) td:nth-child(3) { background: #fff; }
.ptable tr td:first-child { background: linear-gradient(90deg, #dce9f6 60%, #c5d8ee) !important; border-color: #8ba2c4; padding-left: 4px; }
.ptable tr td.hl { background: #add1f5 !important; }
.ptable .pink { color: #c71585; }
.ptable td.um { padding-left: 5px; }
.note-cols { display: flex; border-right: 0; background: #efefef; }
.note { position: relative; flex: 1; display: flex; flex-direction: column; }
.note:first-child { flex: 0 0 198px; border-right: 1px solid #5e7089; }
.note label { height: 26px; line-height: 24px; padding-left: 2px; color: #1f3f8c; background: linear-gradient(#f4f9ff, #d3e1f3); border-bottom: 1px solid #5e7089; }
.note textarea { flex: 1; border: 0; padding: 0; resize: none; background: #efefef; }
.caret { position: absolute; right: 7px; top: 35px; width: 5px; height: 5px; border: solid #aaa; border-width: 1px 0 0 1px; rotate: 45deg; }
```
